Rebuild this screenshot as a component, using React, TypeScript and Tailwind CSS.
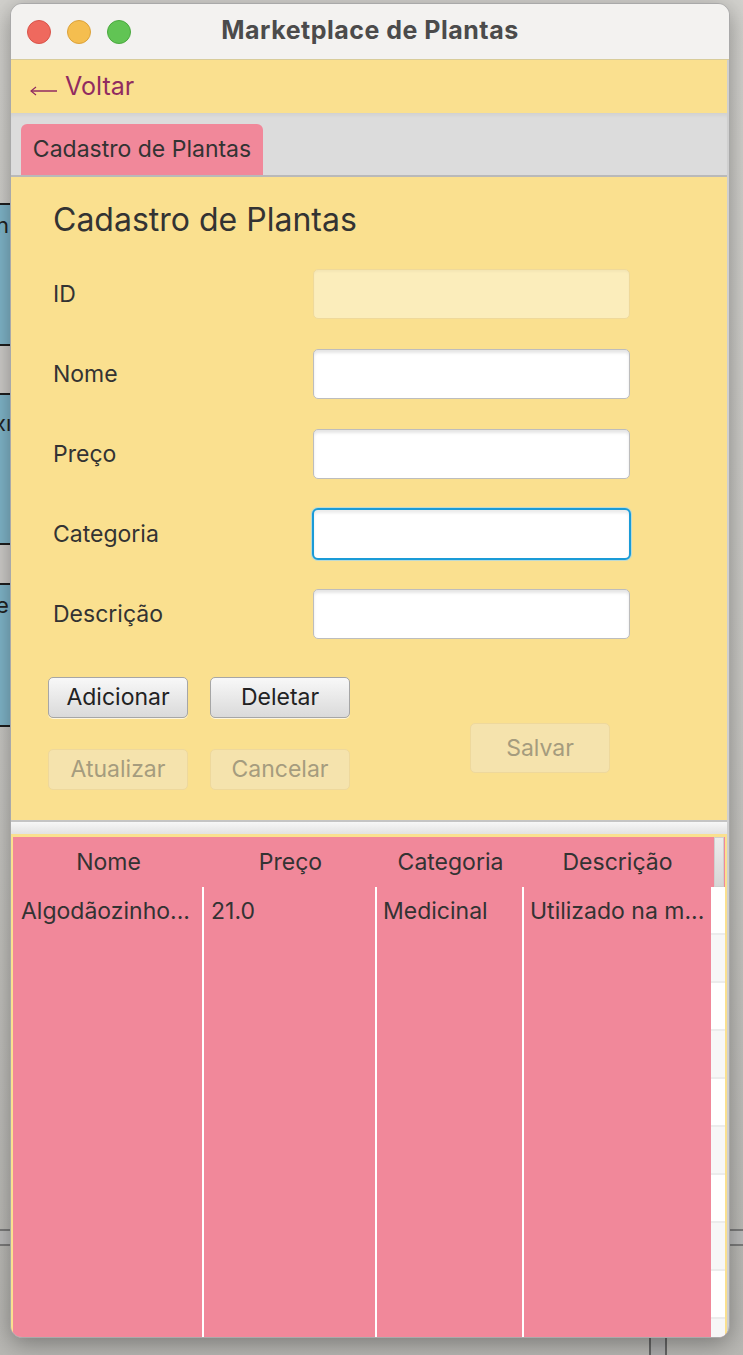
import React from "react";

const FONT = { fontFamily: "Inter, 'Noto Sans', 'Liberation Sans', sans-serif" };

const fields = [
  { label: "ID", kind: "disabled" },
  { label: "Nome", kind: "normal" },
  { label: "Preço", kind: "normal" },
  { label: "Categoria", kind: "focused" },
  { label: "Descrição", kind: "normal" },
];

function TextField({ kind }: { kind: string }) {
  if (kind === "disabled") {
    return (
      <div className="w-[317px] h-[50px] rounded-[5px] border border-[#efd99a] bg-[#fbedbb] shadow-[inset_0_2px_2px_rgba(0,0,0,0.03)]" />
    );
  }
  if (kind === "focused") {
    return (
      <div className="w-[319px] h-[52px] -mx-[1px] rounded-[6px] border-[2px] border-[#1a9bd7] bg-white shadow-[0_0_0_1px_rgba(160,215,240,0.7),inset_0_3px_3px_rgba(0,0,0,0.08)]" />
    );
  }
  return (
    <div className="w-[317px] h-[50px] rounded-[5px] border border-[#bdbdbd] bg-white shadow-[inset_0_3px_3px_rgba(0,0,0,0.1)]" />
  );
}

function Btn({ label, disabled, tall }: { label: string; disabled?: boolean; tall?: boolean }) {
  return (
    <div
      className={`w-[140px] ${tall ? "h-[50px]" : "h-[41px]"} rounded-[5px] flex items-center justify-center text-[23px] ${
        disabled
          ? "border border-[#eed89c] bg-[#f5e3ad] text-[#a59c7e]"
          : "border border-[#a6a6a6] bg-gradient-to-b from-[#f8f8f8] to-[#dadada] text-[#222] shadow-[0_1px_0_rgba(255,255,255,0.7)]"
      }`}
    >
      {label}
    </div>
  );
}

const cols = [
  { head: "Nome", cell: "Algodãozinho...", w: "w-[191px]", line: "border-r-2 border-white", pad: "pl-[8px]" },
  { head: "Preço", cell: "21.0", w: "w-[173px]", line: "border-r-2 border-white", pad: "pl-[7px]" },
  { head: "Categoria", cell: "Medicinal", w: "w-[147px]", line: "border-r-2 border-white", pad: "pl-[6px]" },
  { head: "Descrição", cell: "Utilizado na m...", w: "flex-1", line: "", pad: "pl-[6px]" },
];

function BackgroundScraps() {
  return (
    <>
      {/* left edge of a window behind */}
      <div className="absolute left-0 top-[203px] w-[10px] h-[524px] flex flex-col overflow-hidden text-[22px] text-[#222]">
        <div className="h-[143px] shrink-0 border-y-2 border-[#1e1e1e] bg-[#80b6ca] relative">
          <span className="absolute -left-[4px] top-[4px]">n</span>
        </div>
        <div className="h-[47px] shrink-0 bg-[#cfcdca]" />
        <div className="h-[152px] shrink-0 border-y-2 border-[#1e1e1e] bg-[#80b6ca] relative">
          <span className="absolute -left-[6px] top-[12px]">xı</span>
        </div>
        <div className="h-[38px] shrink-0 bg-[#cfcdca]" />
        <div className="h-[144px] shrink-0 border-y-2 border-[#1e1e1e] bg-[#80b6ca] relative">
          <span className="absolute -left-[12px] top-[4px]">re</span>
        </div>
      </div>
      <div className="absolute left-0 top-[1229px] w-[12px] h-[17px] border-y-2 border-[#7d7d7d] bg-[#bdbdbd]" />
      <div className="absolute right-0 top-[1229px] w-[14px] h-[17px] border-y-2 border-[#7d7d7d] bg-[#bdbdbd]" />
      <div className="absolute left-[649px] top-[1330px] w-[18px] h-[30px] border-x-2 border-[#666] bg-[#adadad]" />
    </>
  );
}

export default function App() {
  return (
    <div
      className="relative w-[743px] h-[1355px] overflow-hidden bg-gradient-to-b from-[#d3d2ce] via-[#cac9c5] to-[#b9b8b4]"
      style={FONT}
    >
      <BackgroundScraps />

      {/* window */}
      <div className="absolute left-[10px] top-[3px] w-[720px] h-[1335px] rounded-[12px] overflow-hidden border border-[#a9a9a9] bg-[#cfcfcf] shadow-[0_6px_24px_rgba(0,0,0,0.35)] flex flex-col">
        {/* title bar */}
        <div className="h-[56px] shrink-0 bg-[#f3f2f0] border-b border-[#d8cc9a] relative flex items-center justify-center">
          <div className="absolute left-[16px] top-[16px] flex gap-[16px]">
            <span className="w-[24px] h-[24px] rounded-full bg-[#ef695e] border border-[#d9544a]" />
            <span className="w-[24px] h-[24px] rounded-full bg-[#f5be4f] border border-[#dca23a]" />
            <span className="w-[24px] h-[24px] rounded-full bg-[#61c454] border border-[#4aa93f]" />
          </div>
          <span className="text-[25px] font-bold text-[#4b4b4b] tracking-[0.5px] -mt-[2px]">Marketplace de Plantas</span>
        </div>

        <div className="flex flex-col mr-[2px] flex-1">
          {/* back bar */}
          <div className="h-[53px] shrink-0 bg-[#fae08f] flex items-center pl-[19px] text-[#912b60]">
            <svg width="28" height="12" viewBox="0 0 28 12" className="mt-[9px] mr-[7px]">
              <path d="M1 6 H27" stroke="#912b60" strokeWidth="1.4" fill="none" />
              <path d="M6 2 L1 6 L6 10" stroke="#912b60" strokeWidth="1.2" fill="none" />
            </svg>
            <span className="text-[25px]">Voltar</span>
          </div>

          {/* tab header */}
          <div className="h-[62px] shrink-0 bg-[#dcdcdc] flex items-end pl-[10px] shadow-[inset_0_4px_4px_-2px_rgba(0,0,0,0.06)]">
            <div className="h-[51px] w-[242px] rounded-t-[6px] bg-[#f1889a] flex items-center justify-center text-[23px] text-[#333]">
              Cadastro de Plantas
            </div>
          </div>
          <div className="h-[2px] shrink-0 bg-[#b9b9b9]" />

          {/* form */}
          <div className="h-[643px] shrink-0 bg-[#fae08f] pl-[42px] pt-[25px] flex flex-col">
            <h1 className="text-[32px] leading-[36px] text-[#333]">Cadastro de Plantas</h1>
            <div className="mt-[31px] flex flex-col gap-[30px]">
              {fields.map((f) => (
                <div key={f.label} className="flex items-center h-[50px]">
                  <span className="w-[260px] text-[23px] text-[#333]">{f.label}</span>
                  <TextField kind={f.kind} />
                </div>
              ))}
            </div>
            <div className="mt-[38px] -ml-[5px] flex">
              <div className="grid grid-cols-[140px_140px] gap-x-[22px] gap-y-[31px]">
                <Btn label="Adicionar" />
                <Btn label="Deletar" />
                <Btn label="Atualizar" disabled />
                <Btn label="Cancelar" disabled />
              </div>
              <div className="ml-[120px] mt-[46px]">
                <Btn label="Salvar" disabled tall />
              </div>
            </div>
          </div>

          {/* split divider */}
          <div className="h-[14px] shrink-0 border-t-2 border-[#c4c4c4] bg-gradient-to-b from-[#f7f7f7] to-[#e2e2e2]" />

          {/* table */}
          <div className="flex-1 flex flex-col border-x-2 border-b-[3px] border-t-[3px] border-[#fae08f] bg-[#f1889a]">
            <div className="h-[50px] shrink-0 flex">
              {cols.map((c) => (
                <div
                  key={c.head}
                  className={`${c.w} flex items-center justify-center text-[23px] text-[#333]`}
                >
                  {c.head}
                </div>
              ))}
              <div className="w-[14px] flex pl-[3px] pr-[1px]">
                <div className="flex-1 bg-gradient-to-b from-[#ececec] to-[#d6d6d6] border border-[#cfcfcf]" />
              </div>
            </div>
            <div className="flex-1 flex">
              {cols.map((c) => (
                <div key={c.cell} className={`${c.w} ${c.line} ${c.pad} pt-[7px] text-[23px] text-[#333]`}>
                  {c.cell}
                </div>
              ))}
              <div className="w-[14px] flex flex-col bg-white">
                {Array.from({ length: 10 }).map((_, i) => (
                  <div
                    key={i}
                    className={`h-[48px] shrink-0 border-b-2 border-[#ececec] ${i % 2 === 1 ? "bg-[#f7f7f7]" : "bg-white"}`}
                  />
                ))}
              </div>
            </div>
          </div>
        </div>
      </div>
    </div>
  );
}
